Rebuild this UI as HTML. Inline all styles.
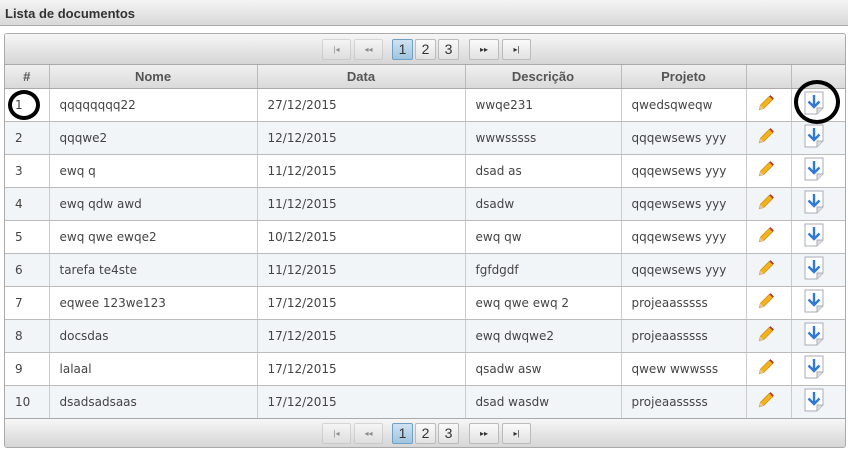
<!DOCTYPE html>
<html><head><meta charset="utf-8"><style>
*{box-sizing:border-box;margin:0;padding:0}
body{width:848px;height:453px;background:#fff;font-family:"DejaVu Sans","Liberation Sans",sans-serif;position:relative;overflow:hidden}
.title{position:absolute;left:0;top:0;width:848px;height:26px;background:linear-gradient(#f4f4f4,#d8d8d8);border-bottom:1px solid #aaa;font:bold 13px "Liberation Sans",sans-serif;color:#333;padding:6px 5px}
.box{position:absolute;left:4px;top:33px;width:842px;height:415px;border:1px solid #aaa;border-radius:3px;overflow:hidden}
.pag{height:31px;background:linear-gradient(#f6f6f6,#d6d6d6);border-bottom:1px solid #aaa;position:relative}
.pb{position:absolute;top:5px;height:21px;border:1px solid #bbb;border-radius:2px;background:linear-gradient(#fafafa,#e2e2e2);font:14px "Liberation Sans",sans-serif;color:#333;text-align:center;line-height:19px}
.pb.d{opacity:.5;font-size:8px}
.pb.a{background:linear-gradient(#cfe3f2,#9fc5e0);border-color:#6fa0c6}
table{border-collapse:collapse;width:841px;table-layout:fixed}
th{height:23px;background:linear-gradient(#f0f0f0,#dadada);border-right:1px solid #bbb;border-bottom:1px solid #aaa;font:bold 13px "Liberation Sans",sans-serif;color:#555}
td{height:33px;border-right:1px solid #ccc;border-bottom:1px solid #bbb;font-size:12px;color:#444;padding-left:10px}
tr.o td{background:#f1f5f8}
th:last-child,td:last-child{border-right:none}
.bot{position:absolute;left:0;bottom:0;width:100%;height:29px;border-top:1px solid #aaa;border-bottom:none}
.circ{position:absolute;border:4px solid #000;border-radius:50%}
</style></head><body>
<div class="title">Lista de documentos</div>
<div class="box">
<div class="pag">
<div class="pb d" style="left:317px;width:29px">|◂</div><div class="pb d" style="left:349px;width:29px">◂◂</div>
<div class="pb a" style="left:387px;width:21px">1</div><div class="pb" style="left:410px;width:21px">2</div><div class="pb" style="left:433px;width:21px">3</div>
<div class="pb" style="left:464px;width:30px;font-size:8px">▸▸</div><div class="pb" style="left:497px;width:29px;font-size:8px">▸|</div>
</div>
<table>
<colgroup><col style="width:44px"><col style="width:208px"><col style="width:208px"><col style="width:156px"><col style="width:125px"><col style="width:45px"><col style="width:55px"></colgroup>
<tr><th>#</th><th>Nome</th><th>Data</th><th>Descrição</th><th>Projeto</th><th></th><th></th></tr>
<tbody id="b"></tbody>
</table>
<div class="pag bot">
<div class="pb d" style="left:317px;width:29px;top:4px">|◂</div><div class="pb d" style="left:349px;width:29px;top:4px">◂◂</div>
<div class="pb a" style="left:387px;width:21px;top:4px">1</div><div class="pb" style="left:410px;width:21px;top:4px">2</div><div class="pb" style="left:433px;width:21px;top:4px">3</div>
<div class="pb" style="left:464px;width:30px;font-size:8px;top:4px">▸▸</div><div class="pb" style="left:497px;width:29px;font-size:8px;top:4px">▸|</div>
</div>
</div>
<div class="circ" style="left:8px;top:90px;width:32px;height:30px"></div>
<div class="circ" style="left:794px;top:80px;width:46px;height:44px"></div>
<script>
var d=[["1","qqqqqqqq22","27/12/2015","wwqe231","qwedsqweqw"],["2","qqqwe2","12/12/2015","wwwsssss","qqqewsews yyy"],["3","ewq q","11/12/2015","dsad as","qqqewsews yyy"],["4","ewq qdw awd","11/12/2015","dsadw","qqqewsews yyy"],["5","ewq qwe ewqe2","10/12/2015","ewq qw","qqqewsews yyy"],["6","tarefa te4ste","11/12/2015","fgfdgdf","qqqewsews yyy"],["7","eqwee 123we123","17/12/2015","ewq qwe ewq 2","projeaasssss"],["8","docsdas","17/12/2015","ewq dwqwe2","projeaasssss"],["9","lalaal","17/12/2015","qsadw asw","qwew wwwsss"],["10","dsadsadsaas","17/12/2015","dsad wasdw","projeaasssss"]];
var pen='<svg width="18" height="18" viewBox="0 0 16 16"><path d="M11 2l3 3-8 8-4 1 1-4z" fill="#f2b21d" stroke="#c98a10" stroke-width=".6"/><path d="M11 2l3 3 1-1-3-3z" fill="#b03030"/><path d="M2 14l1-4 3 3z" fill="#e8c590"/></svg>';
var dl='<svg width="22" height="24" viewBox="0 0 22 24"><path d="M2 1h18v16l-6 6H2z" fill="#fff" stroke="#aab" stroke-width="1"/><path d="M14 23l0-6h6" fill="#ddd" stroke="#aab"/><path d="M11 4v12M5.5 10.5l5.5 5.5 5.5-5.5" fill="none" stroke="#2f7ad6" stroke-width="2.4"/></svg>';
var h='';d.forEach(function(r,i){h+='<tr'+(i%2?' class="o"':'')+'><td>'+r[0]+'</td><td>'+r[1]+'</td><td>'+r[2]+'</td><td>'+r[3]+'</td><td>'+r[4]+'</td><td style="padding-left:10px">'+pen+'</td><td style="padding-left:11px">'+dl+'</td></tr>'});
document.getElementById('b').innerHTML=h;
</script>
</body></html>
